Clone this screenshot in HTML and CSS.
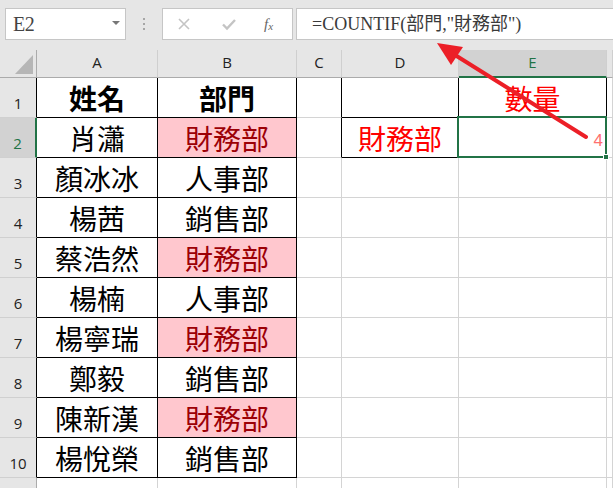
FILE: index.html
```html
<!DOCTYPE html>
<html>
<head>
<meta charset="utf-8">
<link rel="stylesheet" href="styles.css">
</head>
<body>
<div class="app">
  <div class="fbar">
    <div class="namebox"><span class="ref">E2</span><span class="dd"></span></div>
    <div class="dots"><i></i><i></i><i></i></div>
    <div class="fbtns">
      <svg class="ic" width="14" height="14" viewBox="0 0 14 14"><path d="M2 2L12 12M12 2L2 12" stroke="#c4c4c4" stroke-width="1.6" fill="none"/></svg>
      <svg class="ic" width="16" height="14" viewBox="0 0 16 14"><path d="M2 7.5L6 11.5L14 3" stroke="#c4c4c4" stroke-width="2.4" fill="none"/></svg>
      <span class="fx">f<sub>x</sub></span>
    </div>
    <div class="finput">=COUNTIF(部門,"財務部")</div>
  </div>
  <div class="sheet">
    <div class="corner"><span class="tri"></span></div>
    <div class="ch">A</div><div class="ch">B</div><div class="ch">C</div><div class="ch">D</div><div class="ch sel">E</div><div class="ch"></div>

    <div class="rh tb">1</div><div class="c ta b">姓名</div><div class="c tb b">部門</div><div class="c tl"></div><div class="c tb"></div><div class="c tb red">數量</div><div class="c"></div>
    <div class="rh sel">2</div><div class="c ta">肖瀟</div><div class="c tb pink">財務部</div><div class="c tl"></div><div class="c tb red">財務部</div><div class="c tb num"><span>4</span><div class="selbox"><span class="handle"></span></div></div><div class="c"></div>
    <div class="rh tb">3</div><div class="c ta">顏冰冰</div><div class="c tb">人事部</div><div class="c"></div><div class="c"></div><div class="c"></div><div class="c"></div>
    <div class="rh tb">4</div><div class="c ta">楊茜</div><div class="c tb">銷售部</div><div class="c"></div><div class="c"></div><div class="c"></div><div class="c"></div>
    <div class="rh tb">5</div><div class="c ta">蔡浩然</div><div class="c tb pink">財務部</div><div class="c"></div><div class="c"></div><div class="c"></div><div class="c"></div>
    <div class="rh tb">6</div><div class="c ta">楊楠</div><div class="c tb">人事部</div><div class="c"></div><div class="c"></div><div class="c"></div><div class="c"></div>
    <div class="rh tb">7</div><div class="c ta">楊寧瑞</div><div class="c tb pink">財務部</div><div class="c"></div><div class="c"></div><div class="c"></div><div class="c"></div>
    <div class="rh tb">8</div><div class="c ta">鄭毅</div><div class="c tb">銷售部</div><div class="c"></div><div class="c"></div><div class="c"></div><div class="c"></div>
    <div class="rh tb">9</div><div class="c ta">陳新漢</div><div class="c tb pink">財務部</div><div class="c"></div><div class="c"></div><div class="c"></div><div class="c"></div>
    <div class="rh tb">10</div><div class="c ta">楊悅榮</div><div class="c tb">銷售部</div><div class="c"></div><div class="c"></div><div class="c"></div><div class="c"></div>
    <div class="rh"></div><div class="c"></div><div class="c"></div><div class="c"></div><div class="c"></div><div class="c"></div><div class="c"></div>
  </div>
  <svg class="arrow" width="613" height="488" viewBox="0 0 613 488">
    <line x1="586" y1="137" x2="455" y2="55" stroke="#ec1f27" stroke-width="4" stroke-linecap="round"/>
    <polygon points="437,43 463,47 451,65" fill="#ec1f27"/>
  </svg>
</div>
</body>
</html>
```

FILE: styles.css
```css
* { box-sizing: border-box; }
html, body { margin: 0; padding: 0; }
body { width: 613px; height: 488px; overflow: hidden; background: #fff; font-family: "Noto Sans CJK TC", "Noto Sans", sans-serif; }
.app { position: relative; width: 613px; height: 488px; overflow: hidden; }

.fbar { height: 50px; background: #e6e6e6; display: flex; align-items: flex-start; padding-top: 8px; }
.namebox { margin-left: 5px; width: 121px; height: 32px; background: #fff; border: 1px solid #c6c6c6; display: flex; align-items: center; justify-content: space-between; padding: 0 5px 0 7px; }
.ref { font-family: "Liberation Serif", "DejaVu Serif", serif; font-size: 20px; color: #444; letter-spacing: -0.5px; }
.dd { width: 0; height: 0; border-left: 4px solid transparent; border-right: 4px solid transparent; border-top: 4px solid #777; margin-top: -2px; }
.dots { width: 36px; height: 32px; display: flex; flex-direction: column; align-items: center; justify-content: center; gap: 3px; }
.dots i { display: block; width: 2px; height: 2px; background: #a6a6a6; }
.fbtns { width: 131px; height: 32px; background: #fff; border: 1px solid #c6c6c6; display: flex; align-items: center; padding-left: 14px; gap: 0; }
.fbtns .ic:nth-child(1) { margin-right: 30px; }
.fbtns .ic:nth-child(2) { margin-right: 27px; }
.fx { font-family: "Liberation Serif", "DejaVu Serif", serif; font-style: italic; font-size: 15px; color: #666; }
.fx sub { font-size: 11px; vertical-align: -1px; }
.finput { margin-left: 3px; flex: 1; height: 32px; background: #fff; border: 1px solid #c6c6c6; border-right: none; padding-left: 15px; font-family: "Liberation Serif", "Noto Sans CJK TC", serif; font-size: 18px; color: #3a3a3a; line-height: 30px; white-space: nowrap; }

.sheet { display: grid; grid-template-columns: 37px 121px 139px 45px 117px 148px 1fr; grid-template-rows: 28px repeat(11, 40px); }
.corner { background: #e6e6e6; border-right: 1px solid #ababab; border-bottom: 1px solid #ababab; position: relative; }
.tri { position: absolute; right: 3px; bottom: 3px; width: 0; height: 0; border-left: 18px solid transparent; border-bottom: 19px solid #b6b6b6; }
.ch { background: #e6e6e6; border-right: 1px solid #cfcfcf; border-bottom: 1px solid #ababab; display: flex; align-items: center; justify-content: center; font-family: "Open Sans", "Noto Sans", sans-serif; font-size: 15px; color: #222; padding-bottom: 4px; }
.ch.sel { background: #d2d2d2; color: #217346; border-bottom: 2px solid #217346; padding-bottom: 2px; }
.rh { background: #e6e6e6; border-right: 1px solid #ababab; border-bottom: 1px solid #d0d0d0; display: flex; align-items: flex-end; justify-content: center; font-family: "Open Sans", "Noto Sans", sans-serif; font-size: 15px; line-height: 15px; color: #222; padding-bottom: 6px; }
.rh.tb { border-right-color: #000; }
.rh.sel { background: #d2d2d2; color: #217346; border-right: 2px solid #217346; }

.c { border-right: 1px solid #d4d4d4; border-bottom: 1px solid #d4d4d4; display: flex; align-items: center; justify-content: center; font-size: 28px; line-height: 1; color: #000; padding-top: 1px; white-space: nowrap; }
.c.ta, .c.tb { border-right-color: #000; border-bottom-color: #000; }
.c.tl { border-right-color: #000; }
.c.b { font-weight: 700; }
.c.pink { background: #ffc7ce; color: #9c0006; }
.c.red { color: #ff0000; }
.c.num { position: relative; justify-content: flex-end; align-items: flex-end; font-family: "Liberation Sans", "Noto Sans", sans-serif; font-size: 17px; color: #ff7070; padding: 0 3px 8px 0; }
.selbox { position: absolute; left: -2px; top: -2px; right: -1px; bottom: -1px; border: 2px solid #217346; }
.handle { position: absolute; right: -4px; bottom: -4px; width: 6px; height: 6px; background: #217346; border: 1px solid #fff; }

.arrow { position: absolute; left: 0; top: 0; pointer-events: none; }
```
